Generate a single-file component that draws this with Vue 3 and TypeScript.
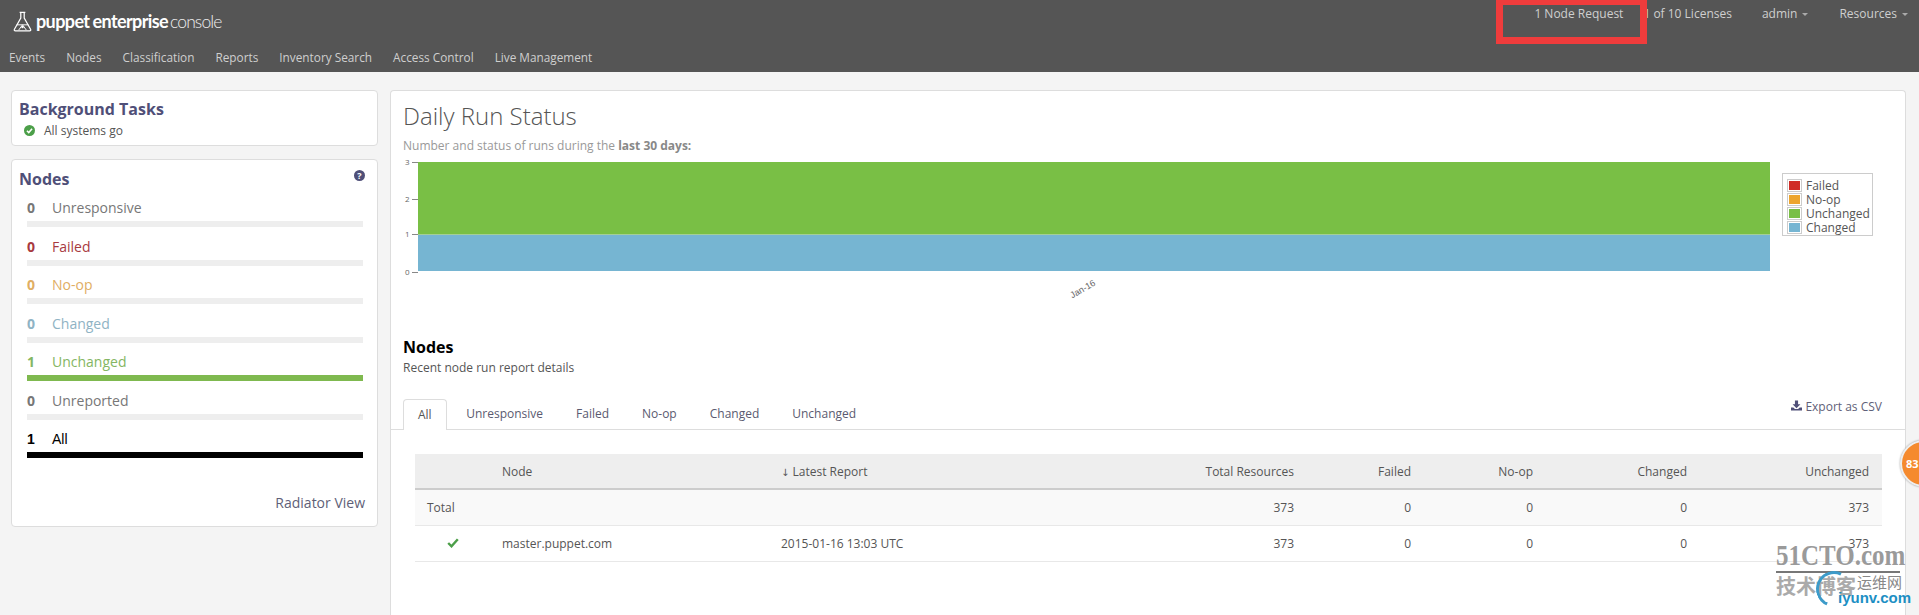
<script setup lang="ts">
const navItems = ['Events', 'Nodes', 'Classification', 'Reports', 'Inventory Search', 'Access Control', 'Live Management']
const statusRows = [
  { n: 0, label: 'Unresponsive', cls: 'grey', full: false },
  { n: 0, label: 'Failed', cls: 'red', full: false },
  { n: 0, label: 'No-op', cls: 'orange', full: false },
  { n: 0, label: 'Changed', cls: 'blue', full: false },
  { n: 1, label: 'Unchanged', cls: 'green', full: true },
  { n: 0, label: 'Unreported', cls: 'grey', full: false },
  { n: 1, label: 'All', cls: 'black', full: true },
]
const tabs = ['All', 'Unresponsive', 'Failed', 'No-op', 'Changed', 'Unchanged']
const legend = [
  { label: 'Failed', color: '#d02c27' },
  { label: 'No-op', color: '#eda52e' },
  { label: 'Unchanged', color: '#79bf45' },
  { label: 'Changed', color: '#76b5d2' },
]
</script>

<template>
  <div class="page">
    <header class="top">
      <div class="top-row">
        <div class="logo">
          <svg class="flask" viewBox="0 0 20 22" width="19" height="21">
            <path d="M7 1.500h6M8.200 1.500v6L1.500 19.200c-.5 1 0 1.600 1 1.600h15c1 0 1.500-.6 1-1.600L11.800 7.500v-6" fill="none" stroke="#fff" stroke-width="1.300" />
            <path d="M3.800 14.500h12.400M6 20l4-5.500 4 5.500" fill="none" stroke="#fff" stroke-width="1" />
            <circle cx="10" cy="16.800" r="1.300" fill="#fff" />
          </svg>
          <span class="logo-bold">puppet</span><span class="logo-bold second">enterprise</span><span class="logo-light">console</span>
        </div>
        <div class="top-links">
          <span class="requests">1 Node Request</span>
          <span class="licenses">1 of 10 Licenses</span>
          <span class="menu admin">admin<i class="caret"></i></span>
          <span class="menu res">Resources<i class="caret"></i></span>
        </div>
      </div>
      <nav class="nav">
        <a v-for="item in navItems" :key="item">{{ item }}</a>
      </nav>
      <div class="redbox"></div>
    </header>

    <main class="content">
      <aside class="side">
        <section class="card tasks">
          <h2>Background Tasks</h2>
          <div class="ok">
            <svg viewBox="0 0 12 12" width="11" height="11">
              <circle cx="6" cy="6" r="6" fill="#4c9f49" />
              <path d="M3.200 6.200l2 2 3.600-4" fill="none" stroke="#fff" stroke-width="1.700" />
            </svg>
            <span>All systems go</span>
          </div>
        </section>
        <section class="card nodes">
          <div class="nodes-head">
            <h2>Nodes</h2>
            <span class="help">?</span>
          </div>
          <div v-for="row in statusRows" :key="row.label" class="srow" :class="row.cls">
            <div class="srow-text"><b>{{ row.n }}</b><span>{{ row.label }}</span></div>
            <div class="bar" :class="{ full: row.full }"></div>
          </div>
          <a class="radiator">Radiator View</a>
        </section>
      </aside>

      <section class="card mainc">
        <div class="mainc-pad">
          <h1>Daily Run Status</h1>
          <p class="sub">Number and status of runs during the <b>last 30 days:</b></p>
          <div class="chart">
            <div class="yaxis">
              <span class="tick t3">3</span>
              <span class="tick t2">2</span>
              <span class="tick t1">1</span>
              <span class="tick t0">0</span>
            </div>
            <div class="plot">
              <div class="p-green"></div>
              <div class="p-blue"></div>
              <span class="jan">Jan-16</span>
            </div>
            <div class="legend">
              <div v-for="l in legend" :key="l.label" class="lrow">
                <span class="swatch"><i :style="{ background: l.color }"></i></span>{{ l.label }}
              </div>
            </div>
          </div>
          <h3>Nodes</h3>
          <p class="recent">Recent node run report details</p>
        </div>

        <div class="tabs">
          <a v-for="(t, i) in tabs" :key="t" class="tab" :class="{ active: i === 0 }">{{ t }}</a>
          <a class="export">
            <svg viewBox="0 0 14 13" width="11" height="11">
              <path d="M5 0h4v5h3L7 10 2 5h3zM0 9h3l2 2h4l2-2h3v4H0z" fill="#4f4f78" />
            </svg>
            Export as CSV
          </a>
        </div>

        <div class="table">
          <div class="tr th">
            <span></span><span>Node</span><span><span class="arrow">↓</span> Latest Report</span>
            <span class="r">Total Resources</span><span class="r">Failed</span><span class="r">No-op</span><span class="r">Changed</span><span class="r">Unchanged</span>
          </div>
          <div class="tr total">
            <span class="tot">Total</span><span></span><span></span>
            <span class="r">373</span><span class="r">0</span><span class="r">0</span><span class="r">0</span><span class="r">373</span>
          </div>
          <div class="tr">
            <span class="chk">
              <svg viewBox="0 0 12 10" width="12" height="10"><path d="M1.200 5l3.300 3.300 6.300-7" fill="none" stroke="#4c9f49" stroke-width="2.400" /></svg>
            </span>
            <span>master.puppet.com</span><span>2015-01-16 13:03 UTC</span>
            <span class="r">373</span><span class="r">0</span><span class="r">0</span><span class="r">0</span><span class="r">373</span>
          </div>
        </div>
      </section>
    </main>

    <div class="bubble">83</div>

    <div class="mark">
      <div class="mark-big">51CTO.com</div>
      <div class="mark-line"></div>
      <div class="mark-cn">技术博客</div>
      <div class="mark-cn2">运维网</div>
      <div class="mark-arc"></div>
      <div class="mark-url">iyunv.com</div>
    </div>
  </div>
</template>

<style>
html, body { margin: 0; background: #f4f4f4; }
</style>

<style scoped>
.page {
  position: relative;
  width: 1919px;
  height: 615px;
  overflow: hidden;
  background: #f4f4f4;
  font-family: "Open Sans", sans-serif;
  font-size: 12px;
  color: #555;
}
.top {
  position: relative;
  height: 72px;
  background: #555;
  color: #cfcfcf;
}
.top-row {
  display: flex;
  justify-content: space-between;
  height: 44px;
}
.logo {
  display: flex;
  align-items: center;
  padding: 0 0 0 13px;
  height: 42px;
  color: #fff;
}
.flask { margin-right: 4px; }
.logo-bold { font-family: Lato, sans-serif; font-weight: 700; font-size: 18px; letter-spacing: -0.6px; }
.logo-bold.second { margin-left: 3px; }
.logo-light { font-family: Lato, sans-serif; font-weight: 300; font-size: 17.500px; letter-spacing: -0.9px; margin-left: 2px; color: #eee; }
.top-links {
  position: relative;
  width: 400px;
  display: flex;
  height: 26px;
  align-items: center;
  margin-right: 11px;
  justify-content: flex-end;
}
.requests { margin-right: 20px; }
.licenses { margin-right: 30px; }
.admin { margin-right: 31px; }
.caret {
  display: inline-block;
  margin-left: 5px;
  vertical-align: 2px;
  border-top: 3px solid #aaa;
  border-left: 3px solid transparent;
  border-right: 3px solid transparent;
}
.nav {
  display: flex;
  gap: 21px;
  padding-left: 9px;
  height: 28px;
  line-height: 27px;
  font-size: 11.800px;
}
.redbox {
  position: absolute;
  left: 1496px;
  top: -2px;
  width: 151px;
  height: 46px;
  box-sizing: border-box;
  border: 7px solid #ef3c3c;
}
.content {
  display: flex;
  gap: 12px;
  padding: 18px 13px 0 11px;
}
.side {
  width: 367px;
  flex: none;
  display: flex;
  flex-direction: column;
  gap: 13px;
}
.card {
  background: #fff;
  border: 1px solid #ddd;
  border-radius: 4px;
  box-sizing: border-box;
}
h2 {
  margin: 0;
  font-size: 16px;
  line-height: 22px;
  font-weight: 700;
  color: #4f4f78;
}
.tasks { height: 56px; padding: 7px 7px; }
.ok {
  display: flex;
  align-items: center;
  gap: 9px;
  padding-left: 5px;
  margin-top: 0;
  line-height: 21px;
  color: #555;
}
.nodes { height: 368px; padding: 8px 14px 0 7px; position: relative; }
.nodes-head { display: flex; justify-content: space-between; height: 30px; margin-bottom: 0; }
.help {
  width: 11px;
  height: 11px;
  margin: 2px -2px 0 0;
  border-radius: 50%;
  background: #4f4f78;
  color: #fff;
  font-size: 9px;
  font-weight: 700;
  line-height: 11px;
  text-align: center;
}
.srow { height: 38.500px; margin-left: 8px; }
.srow-text { display: flex; height: 23px; font-size: 14px; line-height: 20px; }
.srow-text b { width: 25px; font-size: 14px; }
.bar { height: 6px; background: #eee; }
.grey { color: #777; }
.red { color: #a83a3f; }
.orange { color: #dfae63; }
.blue { color: #8fb3c4; }
.green { color: #84b662; }
.black { color: #000; }
.green .bar.full { background: #7fb94f; }
.black .bar.full { background: #000; }
.black .srow-text { font-family: "Liberation Sans", sans-serif; }
.radiator {
  position: absolute;
  right: 12px;
  bottom: 13px;
  font-size: 14px;
  line-height: 20px;
  color: #5f5f78;
}
.mainc {
  flex: 1;
  height: 560px;
  border-bottom: 0;
}
.mainc-pad { padding: 0 12px; }
h1 {
  margin: 0;
  padding-top: 7px;
  height: 38px;
  font-size: 24px;
  line-height: 36px;
  font-weight: 300;
  color: #555;
}
.sub { margin: 0; padding-top: 1px; line-height: 17px; color: #999; height: 17px; }
.sub b { font-weight: 700; color: #888; }
.chart {
  position: relative;
  height: 184px;
  margin-top: -2px;
  display: flex;
}
.yaxis { width: 15px; position: relative; margin-top: 10px; }
.tick {
  position: absolute;
  left: 2px;
  font-size: 8px;
  line-height: 8px;
  color: #666;
}
.tick::after {
  content: "";
  position: absolute;
  left: 7px;
  top: 4px;
  width: 6px;
  height: 1px;
  background: #888;
}
.t3 { top: -4px; }
.t2 { top: 33px; }
.t1 { top: 68px; }
.t0 { top: 106px; }
.plot {
  position: relative;
  width: 1352px;
  height: 109px;
  margin-top: 10px;
  display: flex;
  flex-direction: column;
}
.p-green { height: 72px; background: #79bf45; border-bottom: 1px solid #a4cf96; }
.p-blue { height: 36px; background: #76b5d2; }
.jan {
  position: absolute;
  left: 651px;
  top: 122px;
  font-family: "Liberation Sans", sans-serif;
  font-size: 9px;
  line-height: 10px;
  color: #666;
  transform: rotate(-30deg);
}
.legend {
  position: absolute;
  left: 1379px;
  top: 21px;
  width: 91px;
  height: 63px;
  box-sizing: border-box;
  border: 1px solid #ccc;
  padding: 4px 0 0 4px;
  font-size: 12px;
  color: #555;
}
.lrow { display: flex; align-items: center; height: 14px; }
.swatch {
  width: 15px;
  height: 13px;
  box-sizing: border-box;
  border: 1px solid #ccc;
  padding: 1px;
  margin-right: 4px;
  display: flex;
}
.swatch i { flex: 1; }
h3 {
  margin: 0;
  font-size: 16px;
  line-height: 22px;
  font-weight: 700;
  color: #000;
}
.recent { margin: 0; line-height: 20px; color: #555; }
.tabs {
  display: flex;
  align-items: flex-end;
  height: 51px;
  padding-left: 12px;
  border-bottom: 1px solid #ddd;
  position: relative;
}
.tab {
  padding: 0 16.500px;
  height: 30px;
  line-height: 30px;
  color: #5a5a70;
}
.tab.active {
  height: 31px;
  margin-bottom: -1px;
  padding: 0 14px;
  margin-right: 3px;
  box-sizing: border-box;
  background: #fff;
  border: 1px solid #ddd;
  border-bottom: 0;
  border-radius: 4px 4px 0 0;
  color: #555;
}
.export {
  position: absolute;
  right: 23px;
  top: 19px;
  line-height: 20px;
  font-size: 12px;
  color: #5f5f78;
}
.table { margin: 24px 23px 0 24px; }
.tr {
  display: grid;
  grid-template-columns: 87px 279px 1fr 140px 117px 122px 154px 182px;
  height: 36px;
  align-items: center;
  border-bottom: 1px solid #e8e8e8;
  box-sizing: border-box;
  color: #555;
}
.r { text-align: right; padding-right: 13px; }
.th { background: #eee; border-bottom: 2px solid #ccc; }
.total { background: #f9f9f9; height: 35.500px; }
.tot { padding-left: 12px; }
.chk { display: flex; justify-content: center; padding-right: 12px; }
.arrow { font-family: "DejaVu Sans", sans-serif; font-size: 10px; }
.bubble {
  position: absolute;
  left: 1900px;
  top: 440px;
  width: 47px;
  height: 47px;
  box-sizing: border-box;
  border: 2px solid #eee;
  border-radius: 50%;
  background: #f58a2e;
  color: #fff;
  font-size: 11px;
  font-weight: 700;
  line-height: 43px;
  padding-left: 4px;
  box-shadow: 0 0 2px #999;
}
.mark { position: absolute; left: 1770px; top: 535px; width: 149px; height: 80px; }
.mark-big {
  position: absolute;
  left: 6px;
  top: 6px;
  font-family: "Liberation Serif", serif;
  font-weight: 700;
  font-size: 25px;
  line-height: 24px;
  color: #9a9a9a;
  transform: scaleY(1.200);
  transform-origin: top left;
}
.mark-line { position: absolute; left: 6px; top: 36px; width: 124px; height: 2px; background: #777; }
.mark-cn {
  position: absolute;
  left: 6px;
  top: 39px;
  font-family: "Noto Sans CJK SC", sans-serif;
  font-weight: 700;
  font-size: 20px;
  line-height: 24px;
  color: #aaa;
}
.mark-cn2 {
  position: absolute;
  left: 87px;
  top: 37px;
  font-family: "Noto Sans CJK SC", sans-serif;
  font-size: 15px;
  line-height: 20px;
  color: #888;
}
.mark-arc {
  position: absolute;
  left: 46px;
  top: 36px;
  width: 36px;
  height: 36px;
  box-sizing: border-box;
  border-radius: 50%;
  border: 3px solid transparent;
  border-left-color: #3d9bc9;
  border-top-color: #3d9bc9;
  transform: rotate(-20deg);
}
.mark-url {
  position: absolute;
  left: 68px;
  top: 54px;
  font-family: "Liberation Sans", sans-serif;
  font-weight: 700;
  font-size: 15px;
  line-height: 18px;
  color: #1c8fc4;
}
</style>
